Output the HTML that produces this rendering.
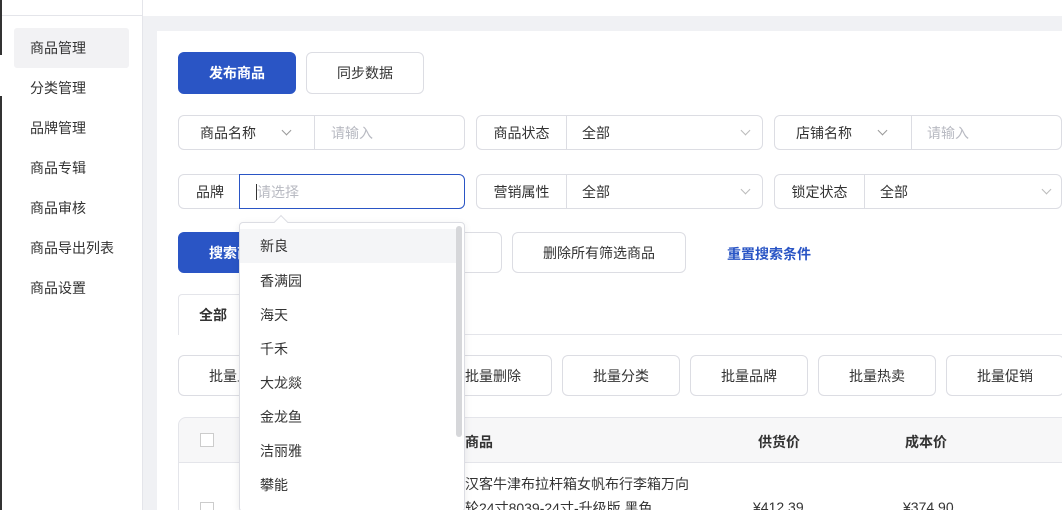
<!DOCTYPE html><html><head><meta charset="utf-8"><style>
*{margin:0;padding:0;box-sizing:border-box}
html,body{width:1062px;height:510px;overflow:hidden}
body{position:relative;background:#f0f1f4;font-family:"Liberation Sans","Noto Sans CJK SC",sans-serif;font-size:14px;color:#333}
.a{position:absolute;white-space:nowrap}
.btn{position:absolute;border:1px solid #dcdde3;border-radius:6px;background:#fff;display:flex;align-items:center;justify-content:center;color:#333;white-space:nowrap}
.blue{background:#2a55c5;border-color:#2a55c5;color:#fff;font-weight:bold}
.box{position:absolute;border:1px solid #dcdde3;border-radius:6px;background:#fff;height:35px;white-space:nowrap}
.lab{position:absolute;top:0;height:33px;display:flex;align-items:center;justify-content:center;border-right:1px solid #dcdde3}
.val{position:absolute;top:0;height:33px;display:flex;align-items:center}
.chev{position:absolute;width:7px;height:7px;border-right:1px solid #999;border-bottom:1px solid #999;transform:rotate(45deg)}
.ph{color:#b8bac2}
.side div{position:absolute;left:30px;white-space:nowrap}
.dd div{position:absolute;left:260px;white-space:nowrap}
</style></head><body>
<div class="a" style="left:0;top:0;width:1062px;height:16px;background:#fff"></div>
<div class="a" style="left:0;top:0;width:143px;height:510px;background:#fff;border-right:1px solid #e4e5ea"></div>
<div class="a" style="left:0;top:15px;width:142px;height:1px;background:#e4e5ea"></div>
<div class="a" style="left:0;top:0;width:2px;height:55px;background:#333"></div>
<div class="a" style="left:0;top:96px;width:2px;height:414px;background:#333"></div>
<div class="a" style="left:14px;top:28px;width:115px;height:40px;background:#f2f2f4;border-radius:3px"></div>
<div class="side">
<div style="top:38px">商品管理</div><div style="top:78px">分类管理</div><div style="top:118px">品牌管理</div><div style="top:158px">商品专辑</div><div style="top:198px">商品审核</div><div style="top:238px">商品导出列表</div><div style="top:278px">商品设置</div>
</div>
<div class="a" style="left:157px;top:31px;width:905px;height:479px;background:#fff"></div>
<div class="btn blue" style="left:178px;top:52px;width:118px;height:42px">发布商品</div>
<div class="btn" style="left:306px;top:52px;width:118px;height:42px">同步数据</div>

<div class="box" style="left:178px;top:115px;width:287px"><div class="lab" style="left:0;width:136px;justify-content:flex-start;padding-left:21px">商品名称</div><div class="chev" style="left:104px;top:11px"></div><div class="val ph" style="left:152px">请输入</div></div>
<div class="box" style="left:476px;top:115px;width:287px"><div class="lab" style="left:0;width:90px">商品状态</div><div class="val" style="left:105px">全部</div><div class="chev" style="left:265px;top:11px;border-color:#bbb"></div></div>
<div class="box" style="left:774px;top:115px;width:288px"><div class="lab" style="left:0;width:137px;justify-content:flex-start;padding-left:21px">店铺名称</div><div class="chev" style="left:104px;top:11px"></div><div class="val ph" style="left:152px">请输入</div></div>

<div class="box" style="left:178px;top:174px;width:287px"><div class="lab" style="left:0;width:62px;border-right:none">品牌</div></div>
<div class="a" style="left:239px;top:174px;width:226px;height:35px;border:1px solid #2a55c5;border-radius:0 6px 6px 0;background:#fff;display:flex;align-items:center;padding-left:16px"><span style="display:inline-block;width:1px;height:16px;background:#333"></span><span class="ph">请选择</span></div>
<div class="box" style="left:476px;top:174px;width:287px"><div class="lab" style="left:0;width:90px">营销属性</div><div class="val" style="left:105px">全部</div><div class="chev" style="left:265px;top:11px;border-color:#bbb"></div></div>
<div class="box" style="left:774px;top:174px;width:288px"><div class="lab" style="left:0;width:90px">锁定状态</div><div class="val" style="left:105px">全部</div><div class="chev" style="left:268px;top:11px;border-color:#bbb"></div></div>

<div class="btn blue" style="left:178px;top:232px;width:118px;height:41px">搜索商品</div>
<div class="btn" style="left:380px;top:232px;width:122px;height:41px"></div>
<div class="btn" style="left:512px;top:232px;width:174px;height:41px">删除所有筛选商品</div>
<div class="a" style="left:727px;top:244px;color:#2a55c5;font-weight:bold">重置搜索条件</div>

<div class="a" style="left:178px;top:334px;width:884px;height:1px;background:#e4e5ea"></div>
<div class="a" style="left:178px;top:294px;width:66px;height:41px;background:#fff;border:1px solid #e4e5ea;border-bottom:none;border-radius:4px 4px 0 0;display:flex;align-items:center;padding-left:20px;font-weight:bold">全部</div>

<div class="btn" style="left:178px;top:355px;width:118px;height:41px">批量上架</div>
<div class="btn" style="left:420px;top:355px;width:132px;height:41px;justify-content:flex-end;padding-right:30px">批量删除</div>
<div class="btn" style="left:562px;top:355px;width:118px;height:41px">批量分类</div>
<div class="btn" style="left:690px;top:355px;width:118px;height:41px">批量品牌</div>
<div class="btn" style="left:818px;top:355px;width:118px;height:41px">批量热卖</div>
<div class="btn" style="left:946px;top:355px;width:118px;height:41px">批量促销</div>

<div class="a" style="left:178px;top:417px;width:900px;height:46px;background:#f7f7f8;border:1px solid #e4e5ea;border-radius:8px 0 0 0"></div>
<div class="a" style="left:200px;top:433px;width:14px;height:14px;border:1px solid #ccc;background:#fff"></div>
<div class="a" style="left:465px;top:432px;font-weight:bold">商品</div>
<div class="a" style="left:758px;top:432px;font-weight:bold">供货价</div>
<div class="a" style="left:905px;top:432px;font-weight:bold">成本价</div>
<div class="a" style="left:178px;top:463px;width:1px;height:47px;background:#e4e5ea"></div>
<div class="a" style="left:200px;top:502px;width:14px;height:14px;border:1px solid #ccc;background:#fff"></div>
<div class="a" style="left:370px;top:504px;width:28px;height:10px;background:#222"></div>
<div class="a" style="left:465px;top:472px;line-height:24px">汉客牛津布拉杆箱女帆布行李箱万向<br>轮24寸8039-24寸-升级版 黑色</div>
<div class="a" style="left:753px;top:499px">¥412.39</div>
<div class="a" style="left:903px;top:499px">¥374.90</div>

<div class="a" style="left:239px;top:222px;width:226px;height:290px;background:#fff;border:1px solid #dcdde3;border-radius:4px;box-shadow:0 2px 8px rgba(0,0,0,.08)"></div>
<div class="a" style="left:276px;top:217px;width:10px;height:10px;background:#fff;border-left:1px solid #dcdde3;border-top:1px solid #dcdde3;transform:rotate(45deg)"></div>
<div class="a" style="left:240px;top:229px;width:218px;height:34px;background:#f4f5f7"></div>
<div class="a" style="left:456px;top:226px;width:6px;height:211px;background:#d6d7da;border-radius:3px"></div>
<div class="dd">
<div style="top:236px">新良</div><div style="top:271px">香满园</div><div style="top:305px">海天</div><div style="top:339px">千禾</div><div style="top:373px">大龙燚</div><div style="top:407px">金龙鱼</div><div style="top:441px">洁丽雅</div><div style="top:475px">攀能</div>
</div>
</body></html>
